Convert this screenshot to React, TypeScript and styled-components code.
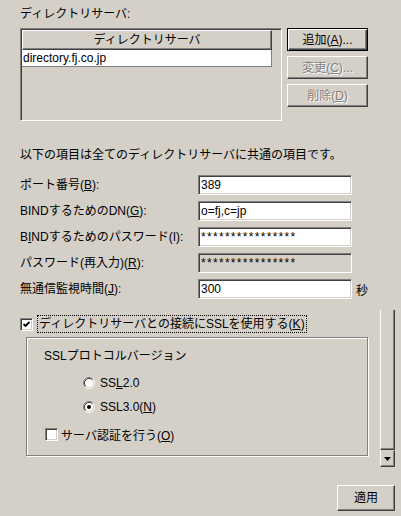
import { Fragment, ReactNode } from 'react'
import styled, { createGlobalStyle, css } from 'styled-components'

const GlobalStyle = createGlobalStyle`
    body {
        margin: 0;
        background: #d4d0c8;
        font-family: "Liberation Sans", "Noto Sans CJK JP", sans-serif;
        font-size: 12px;
        color: #000;
    }
`

const sunken = css`
    border: 1px solid;
    border-color: #808080 #fff #fff #808080;
    box-shadow: inset 1px 1px 0 #404040, inset -1px -1px 0 #d4d0c8;
`

const Page = styled.div`
    width: 401px;
    height: 516px;
    box-sizing: border-box;
    padding: 7px 0 0 20px;
    overflow: hidden;
`
const Caption = styled.div`
    line-height: 14px;
    margin-bottom: 7px;
`
const TopRow = styled.div`
    display: flex;
    gap: 5px;
`
const ListPanel = styled.div`
    ${sunken};
    box-sizing: border-box;
    width: 262px;
    height: 93px;
    padding: 1px;
`
const ListTable = styled.div`
    width: 250px;
`
const ListHeader = styled.div`
    box-sizing: border-box;
    height: 20px;
    line-height: 18px;
    text-align: center;
    border: 1px solid;
    border-color: #fff #404040 #404040 #fff;
    box-shadow: inset -1px -1px 0 #808080;
`
const ListRow = styled.div`
    box-sizing: border-box;
    height: 17px;
    line-height: 16px;
    padding-left: 1px;
    background: #fff;
    border-right: 1px solid #808080;
    border-bottom: 1px solid #808080;
`
const ButtonColumn = styled.div`
    display: flex;
    flex-direction: column;
    gap: 5px;
`
const Button = styled.button<{ $default?: boolean, $width?: number, $height?: number }>`
    box-sizing: border-box;
    width: ${p => p.$width ?? 81}px;
    height: ${p => p.$height ?? 23}px;
    padding: 0;
    font: inherit;
    line-height: 14px;
    background: #d4d0c8;
    color: #000;
    border: 1px solid;
    border-color: #fff #404040 #404040 #fff;
    box-shadow: inset -1px -1px 0 #808080;
    ${p => p.$default && css`
        border-color: #000;
        box-shadow: inset 1px 1px 0 #fff, inset -1px -1px 0 #404040, inset -2px -2px 0 #808080;
    `}
    &:disabled {
        color: #808080;
        text-shadow: 1px 1px 0 #fff;
    }
`
const Note = styled.div`
    margin-top: 27px;
    line-height: 14px;
`
const Form = styled.div`
    margin-top: 13px;
    display: grid;
    grid-template-columns: 178px 154px auto;
    grid-auto-rows: 20px;
    row-gap: 6px;
    align-items: center;
`
const FieldLabel = styled.div`
    line-height: 14px;
`
const Field = styled.div<{ $disabled?: boolean, $masked?: boolean }>`
    ${sunken};
    box-sizing: border-box;
    height: 20px;
    padding: 0 2px;
    line-height: 18px;
    background: ${p => p.$disabled ? '#d4d0c8' : '#fff'};
    letter-spacing: ${p => p.$masked ? '1.3px' : '0'};
    white-space: nowrap;
    overflow: hidden;
`
const Unit = styled.span`
    margin-left: 4px;
`
const Lower = styled.div`
    margin-top: 11px;
    display: flex;
`
const LowerLeft = styled.div`
    width: 349px;
    padding-top: 5px;
`
const CheckRow = styled.div<{ $gap?: number }>`
    display: flex;
    align-items: center;
    gap: ${p => p.$gap ?? 4}px;
    height: 18px;
`
const Focus = styled.span`
    border: 1px dotted #000;
    padding: 0 1px;
    line-height: 16px;
`
const Box = styled.span`
    ${sunken};
    box-sizing: border-box;
    width: 13px;
    height: 13px;
    background: #fff;
    display: flex;
    align-items: center;
    justify-content: center;
`
const Group = styled.div`
    box-sizing: border-box;
    margin: 4px 0 0 6px;
    width: 342px;
    height: 119px;
    padding: 11px 0 0 17px;
    border: 1px solid #808080;
    box-shadow: inset 1px 1px 0 #fff, 1px 1px 0 #fff;
`
const GroupTitle = styled.div`
    line-height: 14px;
`
const RadioList = styled.div`
    margin: 12px 0 0 39px;
    display: flex;
    flex-direction: column;
    gap: 8px;
`
const RadioRow = styled.div`
    display: flex;
    align-items: center;
    gap: 5px;
    height: 16px;
`
const GroupCheck = styled(CheckRow)`
    margin: 11px 0 0 1px;
    height: 16px;
`
const Scrollbar = styled.div`
    margin-left: 11px;
    width: 15px;
    height: 157px;
    display: flex;
    flex-direction: column;
`
const Thumb = styled.div`
    box-sizing: border-box;
    flex: 1;
    border-left: 1px solid #fff;
    border-right: 1px solid #404040;
    border-bottom: 1px solid #404040;
    box-shadow: inset -1px -1px 0 #808080;
`
const ArrowButton = styled.div`
    box-sizing: border-box;
    height: 17px;
    border: 1px solid;
    border-color: #d4d0c8 #404040 #404040 #fff;
    box-shadow: inset -1px -1px 0 #808080;
    display: flex;
    align-items: center;
    justify-content: center;
`
const Footer = styled.div`
    margin-top: 18px;
    padding-right: 6px;
    display: flex;
    justify-content: flex-end;
`
const U = styled.span`
    text-decoration: underline;
    text-underline-offset: 1px;
`

const Radio = ({ checked }: { checked?: boolean }) => <svg width="12" height="12" viewBox="0 0 12 12">
    <circle cx="6" cy="6" r="4.5" fill="#fff"/>
    <path d="M2.11 9.89 A5.5 5.5 0 0 1 9.89 2.11" stroke="#808080" fill="none"/>
    <path d="M9.89 2.11 A5.5 5.5 0 0 1 2.11 9.89" stroke="#fff" fill="none"/>
    <path d="M2.82 9.18 A4.5 4.5 0 0 1 9.18 2.82" stroke="#404040" fill="none"/>
    <path d="M9.18 2.82 A4.5 4.5 0 0 1 2.82 9.18" stroke="#d4d0c8" fill="none"/>
    { checked && <circle cx="6" cy="6" r="2" fill="#000"/> }
</svg>

const CheckBox = ({ checked }: { checked?: boolean }) => <Box>
    { checked && <svg width="7" height="7" viewBox="0 0 7 7">
        <path d="M0.5 3 L2.5 5 L6.5 1" stroke="#000" strokeWidth="1.8" fill="none"/>
    </svg> }
</Box>

const fields: { label: ReactNode, value: string, disabled?: boolean, masked?: boolean, unit?: string }[] = [
    { label: <>ポート番号(<U>B</U>):</>, value: '389' },
    { label: <>BINDするためのDN(<U>G</U>):</>, value: 'o=fj,c=jp' },
    { label: <>B<U>I</U>NDするためのパスワード(I):</>, value: '****************', masked: true },
    { label: <>パスワード(再入力)(<U>R</U>):</>, value: '****************', masked: true, disabled: true },
    { label: <>無通信監視時間(<U>J</U>):</>, value: '300', unit: '秒' },
]

const App = () => {
    return <Page>
        <GlobalStyle/>
        <Caption>ディレクトリサーバ:</Caption>
        <TopRow>
            <ListPanel>
                <ListTable>
                    <ListHeader>ディレクトリサーバ</ListHeader>
                    <ListRow>directory.fj.co.jp</ListRow>
                </ListTable>
            </ListPanel>
            <ButtonColumn>
                <Button $default>追加(<U>A</U>)...</Button>
                <Button disabled>変更(<U>C</U>)...</Button>
                <Button disabled>削除(<U>D</U>)</Button>
            </ButtonColumn>
        </TopRow>
        <Note>以下の項目は全てのディレクトリサーバに共通の項目です。</Note>
        <Form>
            {fields.map((f, i) => <Fragment key={i}>
                <FieldLabel>{f.label}</FieldLabel>
                <Field $disabled={f.disabled} $masked={f.masked}>{f.value}</Field>
                <div>{f.unit && <Unit>{f.unit}</Unit>}</div>
            </Fragment>)}
        </Form>
        <Lower>
            <LowerLeft>
                <CheckRow>
                    <CheckBox checked/>
                    <Focus>ディレクトリサーバとの接続にSSLを使用する(<U>K</U>)</Focus>
                </CheckRow>
                <Group>
                    <GroupTitle>SSLプロトコルバージョン</GroupTitle>
                    <RadioList>
                        <RadioRow><Radio/><span>SS<U>L</U>2.0</span></RadioRow>
                        <RadioRow><Radio checked/><span>SSL3.0(<U>N</U>)</span></RadioRow>
                    </RadioList>
                    <GroupCheck $gap={3}>
                        <CheckBox/>
                        <span>サーバ認証を行う(<U>O</U>)</span>
                    </GroupCheck>
                </Group>
            </LowerLeft>
            <Scrollbar>
                <Thumb/>
                <ArrowButton>
                    <svg width="7" height="4" viewBox="0 0 7 4"><polygon points="0,0 7,0 3.5,4" fill="#000"/></svg>
                </ArrowButton>
            </Scrollbar>
        </Lower>
        <Footer>
            <Button $width={58} $height={26}>適用</Button>
        </Footer>
    </Page>
}

export default App
